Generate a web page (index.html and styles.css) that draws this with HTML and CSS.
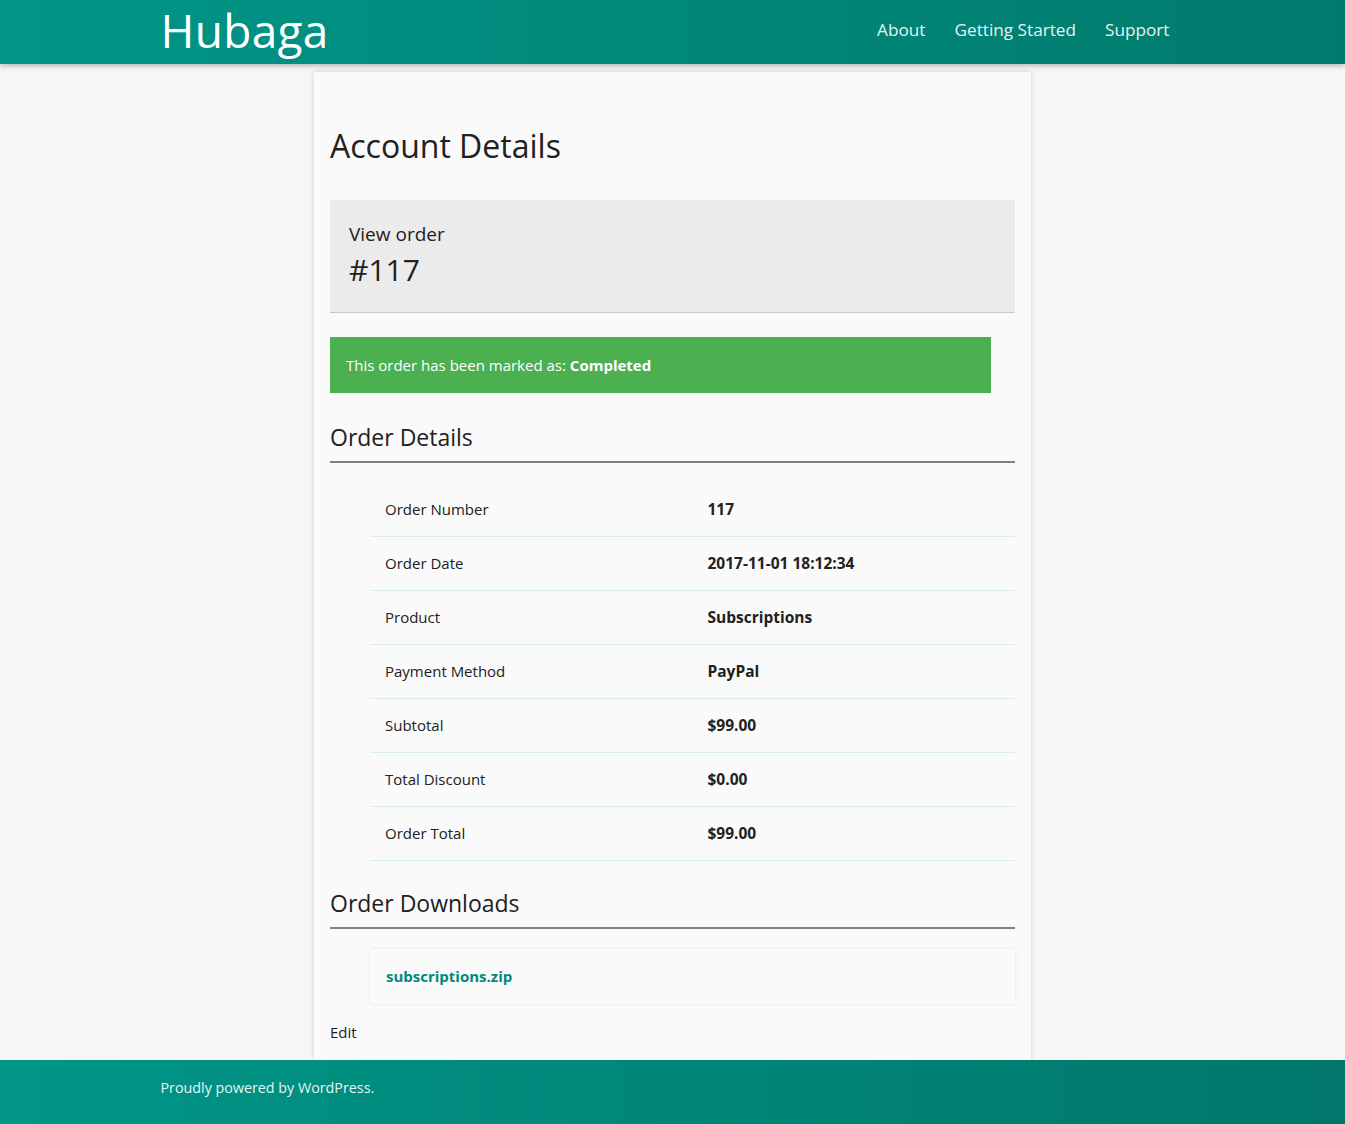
FILE: index.html
```html
<!DOCTYPE html>
<html lang="en">
<head>
<meta charset="utf-8">
<title>Account Details – Hubaga</title>
<link rel="stylesheet" href="styles.css">
</head>
<body>
<header class="site-header">
  <div class="wrap header-inner">
    <a class="logo" href="#">Hubaga</a>
    <nav class="main-nav">
      <a href="#">About</a>
      <a href="#">Getting Started</a>
      <a href="#">Support</a>
    </nav>
  </div>
</header>

<main class="card">
  <h1 class="page-title">Account Details</h1>

  <div class="order-head">
    <div class="order-label">View order</div>
    <div class="order-num">#117</div>
  </div>

  <div class="notice">This order has been marked as: <strong>Completed</strong></div>

  <h2 class="section-title">Order Details</h2>
  <table class="details">
    <tbody>
      <tr><td>Order Number</td><td class="val">117</td></tr>
      <tr><td>Order Date</td><td class="val">2017-11-01 18:12:34</td></tr>
      <tr><td>Product</td><td class="val">Subscriptions</td></tr>
      <tr><td>Payment Method</td><td class="val">PayPal</td></tr>
      <tr><td>Subtotal</td><td class="val">$99.00</td></tr>
      <tr><td>Total Discount</td><td class="val">$0.00</td></tr>
      <tr><td>Order Total</td><td class="val">$99.00</td></tr>
    </tbody>
  </table>

  <h2 class="section-title section-title--after-table">Order Downloads</h2>
  <div class="download">
    <a href="#">subscriptions.zip</a>
  </div>

  <a class="edit" href="#">Edit</a>
</main>

<footer class="site-footer">
  <div class="wrap">Proudly powered by WordPress.</div>
</footer>
</body>
</html>
```
FILE: styles.css
```css
* { box-sizing: border-box; }
html, body { margin: 0; padding: 0; }
body {
  background: #f6f6f6;
  color: #212121;
  font-family: "Open Sans", "Noto Sans", sans-serif;
  font-size: 15px;
  min-height: 1124px;
  display: flex;
  flex-direction: column;
}
a { text-decoration: none; color: inherit; }

.wrap { width: 1024px; margin: 0 auto; }

.site-header {
  height: 64px;
  flex: none;
  background: linear-gradient(90deg, #009688 0%, #007a6c 100%);
  box-shadow: 0 2px 5px rgba(0,0,0,0.25);
  position: relative;
  z-index: 2;
}
.header-inner {
  display: flex;
  align-items: center;
  justify-content: space-between;
  height: 64px;
}
.logo {
  color: #fff;
  font-size: 46px;
  line-height: 64px;
  margin-top: -4px;
  letter-spacing: 0.3px;
}
.main-nav { display: flex; gap: 29px; padding-right: 15px; margin-top: -6px; }
.main-nav a { color: #e6f4f2; font-size: 17.2px; }

.card {
  width: 717px;
  margin: 8px auto 0;
  background: #fafafa;
  box-shadow: 0 0 4px rgba(0,0,0,0.18);
  padding: 54px 16px 14px;
  flex: 1;
}
.page-title {
  font-size: 32px;
  font-weight: 500;
  margin: 0 0 34px;
  line-height: 40px;
}
.order-head {
  background: #ebebeb;
  border-bottom: 1px solid #c8c8c8;
  padding: 20px 19px 20px;
}
.order-label { font-size: 19px; line-height: 28px; }
.order-num { font-size: 30px; line-height: 44px; }

.notice {
  background: #4caf50;
  color: #fff;
  width: 661px;
  margin-top: 24px;
  padding: 18px 16px;
  font-size: 15px;
  line-height: 20px;
}
.section-title {
  font-size: 23px;
  font-weight: 500;
  margin: 29px 0 0;
  padding-bottom: 9px;
  border-bottom: 2px solid #808080;
  line-height: 30px;
}
.section-title--after-table { margin-top: 27px; }
.details {
  margin: 19px 0 0 40px;
  width: 645px;
  border-collapse: collapse;
}
.details td {
  width: 50%;
  height: 54px;
  padding: 0 15px;
  border-bottom: 1px solid #d8eeea;
  font-size: 15px;
}
.details td.val { font-weight: 700; font-size: 15.5px; }

.download {
  margin: 20px 0 0 40px;
  box-shadow: 0 0 3px rgba(0,0,0,0.1);
  background: #fafafa;
  padding: 15px 16px;
  line-height: 25px;
}
.download a { color: #00897b; font-weight: 700; font-size: 15px; }

.edit { display: inline-block; margin-top: 18px; font-size: 15px; }

.site-footer {
  height: 64px;
  flex: none;
  background: linear-gradient(90deg, #009688 0%, #00776a 100%);
  color: #e6f4f2;
  font-size: 14.3px;
  line-height: 56px;
  position: relative;
  z-index: 2;
}
```
